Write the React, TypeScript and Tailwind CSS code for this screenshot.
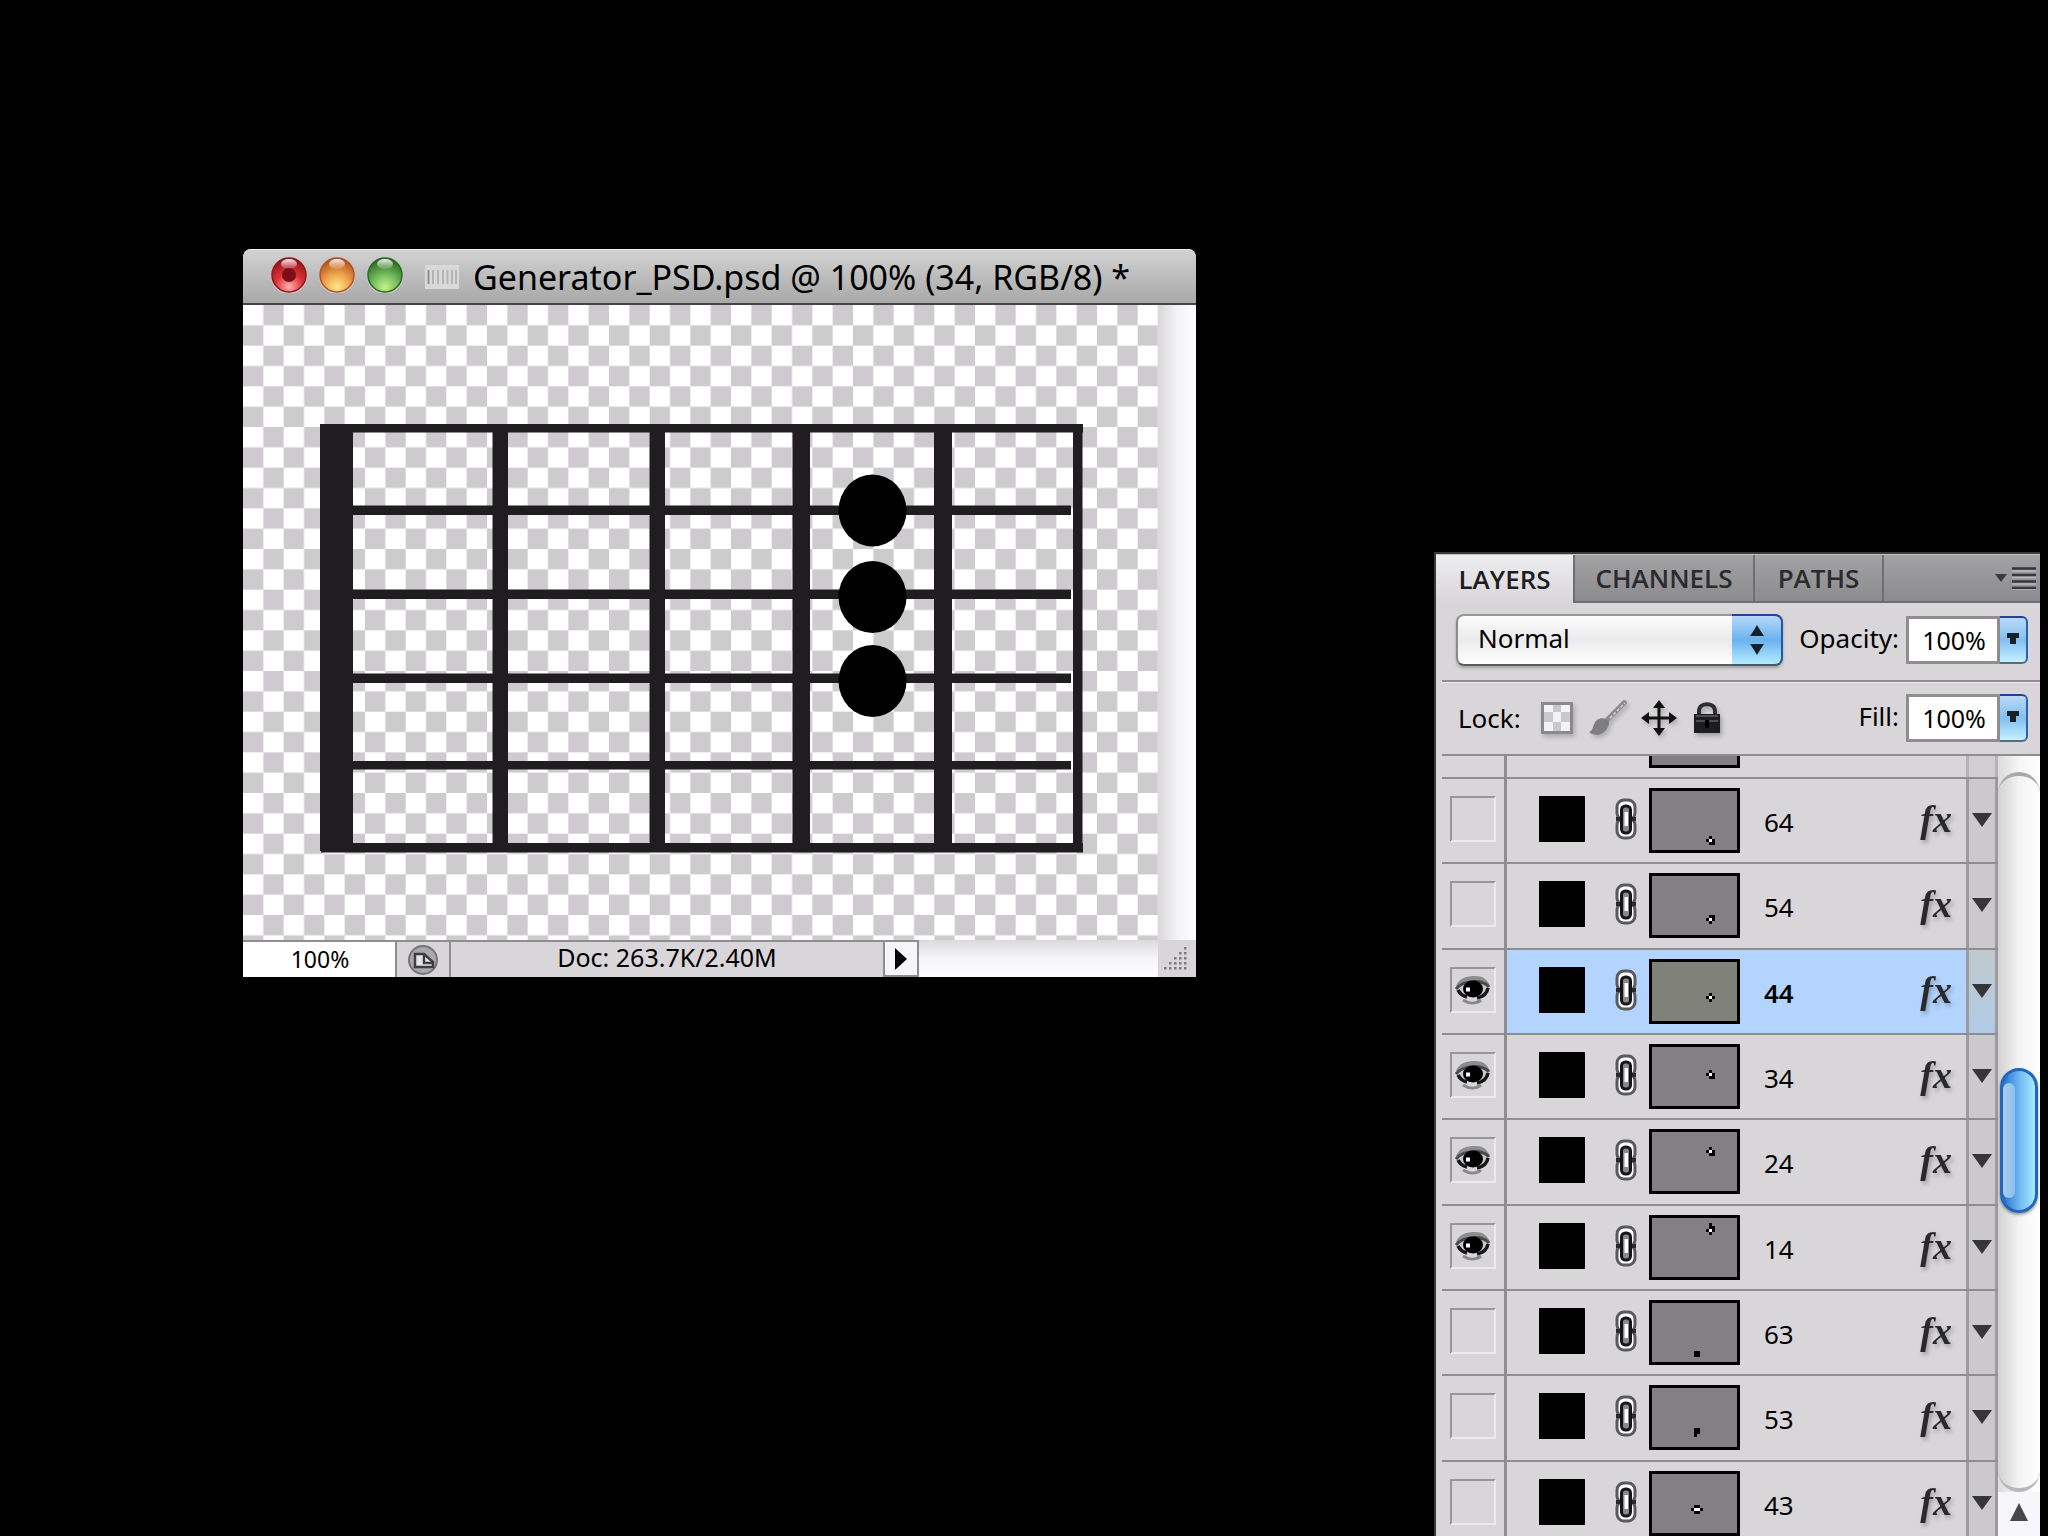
interface Layer {
  name: string;
  visible: boolean;
  // Mask marker: # is black, o is white
  mark: string[];
  markX: number;
  markY: number;
}

const LAYERS: Layer[] = [
  { name: '64', visible: false, mark: ['.#.', '#o#', '.##'], markX: 61, markY: 52 },
  { name: '54', visible: false, mark: ['.##', '#o#', '.#.'], markX: 61, markY: 46 },
  { name: '44', visible: true, mark: ['.#.', '#o#', '.#.'], markX: 61, markY: 38 },
  { name: '34', visible: true, mark: ['.#.', '#o#', '.##'], markX: 61, markY: 30 },
  { name: '24', visible: true, mark: ['.#.', '#o#', '.##'], markX: 61, markY: 22 },
  { name: '14', visible: true, mark: ['.#.', '.##', '#o#', '.#.'], markX: 61, markY: 14 },
  { name: '63', visible: false, mark: ['##', '##'], markX: 48, markY: 54 },
  { name: '53', visible: false, mark: ['##', '##', '#.'], markX: 48, markY: 47 },
  { name: '43', visible: false, mark: ['.##.', '#oo#', '.##.'], markX: 48, markY: 38 },
];

const SELECTED = '44';
const PX = 3;

function TrafficLight({ id, dark, mid, light, dot }: { id: string; dark: string; mid: string; light: string; dot?: boolean }) {
  return (
    <button aria-label={id} className="block size-9">
      <svg viewBox="0 0 36 36" className="size-9">
        <defs>
          <radialGradient id={id} cx="0.5" cy="0.85" r="0.8">
            <stop offset="0" stopColor={light} />
            <stop offset="0.5" stopColor={mid} />
            <stop offset="1" stopColor={dark} />
          </radialGradient>
          <linearGradient id={`${id}-shine`} x1="0" y1="0" x2="0" y2="1">
            <stop offset="0" stopColor="#fff" stopOpacity="0.9" />
            <stop offset="1" stopColor="#fff" stopOpacity="0.1" />
          </linearGradient>
        </defs>
        <circle cx="18" cy="19" r="18" fill="#e4e4e4" opacity="0.6" />
        <circle cx="18" cy="18" r="17" fill={`url(#${id})`} stroke={dark} strokeWidth="1.5" />
        <ellipse cx="18" cy="7" rx="8" ry="5" fill={`url(#${id}-shine)`} />
        {dot && <circle cx="18" cy="18" r="7" fill="#7c0f16" />}
      </svg>
    </button>
  );
}

function Fretboard() {
  return (
    <svg viewBox="0 0 915 635" className="block h-[635px] w-[915px] shrink-0">
      <defs>
        <pattern id="checker" width="40.667" height="40.667" patternUnits="userSpaceOnUse">
          <rect width="40.667" height="40.667" fill="#fff" />
          <rect x="20.333" width="20.334" height="20.333" fill="#cdcbcd" />
          <rect y="20.333" width="20.333" height="20.334" fill="#cdcbcd" />
        </pattern>
      </defs>
      <rect width="915" height="635" fill="url(#checker)" />
      <g fill="#1f1d20">
        <rect x="77" y="119" width="763" height="8.5" />
        <rect x="78" y="538" width="762" height="9.5" />
        <rect x="77" y="119" width="33" height="427" />
        <rect x="249.5" y="119" width="15.5" height="428" />
        <rect x="406.5" y="119" width="15.5" height="428" />
        <rect x="549.5" y="119" width="17.5" height="428" />
        <rect x="691" y="119" width="18" height="428" />
        <rect x="830" y="119" width="9.5" height="428" />
        <rect x="110" y="200.5" width="718" height="9.5" />
        <rect x="110" y="284.5" width="718" height="9.5" />
        <rect x="110" y="368.5" width="718" height="9.5" />
        <rect x="110" y="456" width="718" height="8.5" />
      </g>
      <g>
        <ellipse cx="629.5" cy="205.5" rx="34" ry="36" />
        <ellipse cx="629.5" cy="292" rx="34" ry="36" />
        <ellipse cx="629.5" cy="376" rx="34" ry="36" />
      </g>
    </svg>
  );
}

function ProofIcon() {
  return (
    <svg viewBox="0 0 32 32" className="size-8">
      <circle cx="16" cy="16" r="14" fill="#a9a8aa" stroke="#757476" strokeWidth="2" />
      <path d="M8 10h9l9 8v5H8z" fill="#e6e6e6" stroke="#3f3e40" strokeWidth="2.5" />
      <path d="M17 10v9h9" fill="none" stroke="#3f3e40" strokeWidth="2.5" />
    </svg>
  );
}

function DocumentWindow() {
  return (
    <section className="absolute top-[249px] left-[243px] flex w-[953px] flex-col overflow-hidden rounded-t-lg bg-[#d8d6d9]">
      <header className="flex h-14 items-center border-t border-b-2 border-t-[#efefef] border-b-[#454545] bg-linear-to-b from-[#d2d2d2] to-[#a8a8a8] pl-7">
        <div className="flex gap-3 pb-1">
          <TrafficLight id="close" dark="#94161c" mid="#dc3238" light="#ffb3b0" dot />
          <TrafficLight id="minimize" dark="#b3521f" mid="#eea04a" light="#ffe98a" />
          <TrafficLight id="zoom" dark="#2c6a24" mid="#6fb758" light="#c4f28e" />
        </div>
        <svg viewBox="0 0 34 24" className="mr-3.5 ml-[22px] h-6 w-[34px]">
          <rect width="34" height="24" fill="#d9d9d9" />
          <path d="M3.500 5v14M8 5v14M13 5v14M18 5v14M22.500 5v14M27 5v14M31 5v14" stroke="#b4b4b4" strokeWidth="2" />
          <path d="M3.500 5v14" stroke="#8a8a8a" strokeWidth="1.500" />
        </svg>
        <h1 className="text-[34px] leading-10 whitespace-nowrap text-black">Generator_PSD.psd @ 100% (34, RGB/8) *</h1>
      </header>
      <div className="flex">
        <Fretboard />
        <div className="flex-1 bg-linear-to-r from-[#d9d7da] via-[#f4f3f5] to-[#fdfcfe]" />
      </div>
      <footer className="flex h-[37px] text-[25px] leading-8">
        <input
          aria-label="Zoom level"
          defaultValue="100%"
          className="w-[154px] border-t-2 border-r-2 border-[#8f8d90] bg-white pb-0.5 pl-0.5 text-center text-[23px] outline-none"
        />
        <button aria-label="Proof" className="flex w-[54px] items-center justify-center border-t-2 border-r-2 border-[#8f8d90]">
          <ProofIcon />
        </button>
        <p className="w-[432px] border-t-2 border-[#8f8d90] text-center leading-[30px]">Doc: 263.7K/2.40M</p>
        <button aria-label="Status menu" className="flex w-9 items-center justify-center border-2 border-[#8f8d90] bg-[#f6f5f7]">
          <svg viewBox="0 0 14 24" className="h-6 w-3.5">
            <path d="M1 1l12 11L1 23z" />
          </svg>
        </button>
        <div className="flex-1 bg-linear-to-b from-[#dcdadd] via-[#f6f5f7] to-[#fdfcfe]" />
        <div className="flex w-[38px] items-center justify-center bg-[#d8d6d9] pr-1">
          <svg viewBox="0 0 26 26" className="size-[26px]" fill="#7b7a7c">
            {[0, 1, 2, 3, 4].map((row) =>
              Array.from({ length: row + 1 }, (_, i) => (
                <rect key={`${row}-${i}`} x={22 - i * 5} y={1 + row * 5} width="2.500" height="2.500" />
              )),
            )}
          </svg>
        </div>
      </footer>
    </section>
  );
}

function EyeIcon() {
  return (
    <svg viewBox="0 0 36 30" className="h-[30px] w-9">
      <path d="M1 11C4 3 12 1 20 1s12 3 15 10l-4 0C24 5 11 5 4 12z" fill="#8d8c8f" />
      <path d="M3 13C8 6 26 5 33 12c-1 2-2 4-4 5C22 24 9 22 3 13z" fill="#c9c8cb" />
      <path d="M1 14C8 5 27 4 34 12" fill="none" stroke="#4a494b" strokeWidth="3" />
      <ellipse cx="18" cy="14" rx="10" ry="8.500" />
      <rect x="11" y="12.500" width="4" height="4" fill="#fff" />
      <path d="M3 15c2 4 5 6 9 7M33 13c-1 6-6 9-11 10" fill="none" stroke="#171618" strokeWidth="3.500" />
      <path d="M8 25c6 4 13 4 18 0" fill="none" stroke="#8a898c" strokeWidth="3" />
    </svg>
  );
}

function LinkIcon() {
  return (
    <svg viewBox="0 0 22 42" className="h-[42px] w-[22px]">
      <rect x="2" y="2" width="18" height="20" rx="7" fill="#fff" stroke="#5a595b" strokeWidth="3" />
      <rect x="2" y="20" width="18" height="20" rx="7" fill="#fff" stroke="#5a595b" strokeWidth="3" />
      <path d="M1 21h5M16 21h5" stroke="#2a292b" strokeWidth="4" />
      <rect x="6.500" y="8" width="9" height="27" rx="4" fill="#8a898b" stroke="#161517" strokeWidth="3" />
      <rect x="9.500" y="14" width="3.500" height="14" fill="#fff" />
    </svg>
  );
}

function MaskThumb({ layer }: { layer: Layer }) {
  const left = Math.round(layer.markX - (layer.mark[0].length * PX) / 2);
  const top = Math.round(layer.markY - (layer.mark.length * PX) / 2);
  return (
    <svg viewBox="0 0 91 65" className="h-[65px] w-[91px]">
      <rect width="91" height="65" />
      <rect x="3" y="3" width="85" height="59" fill={layer.name === SELECTED ? '#808179' : '#828083'} />
      {layer.mark.map((row, y) =>
        [...row].map((c, x) =>
          c === '.' ? null : (
            <rect
              key={`${x}-${y}`}
              x={left + x * PX}
              y={top + y * PX}
              width={PX}
              height={PX}
              fill={c === 'o' ? '#fff' : '#000'}
            />
          ),
        ),
      )}
    </svg>
  );
}

function LayerRow({ layer }: { layer: Layer }) {
  const selected = layer.name === SELECTED;
  return (
    <li className="flex border-t-2 border-[#8f8d90]">
      <div className="w-[65px] shrink-0 border-r-3 border-[#8f8d90] pt-[17px] pl-2">
        <button
          aria-label={`Toggle visibility of layer ${layer.name}`}
          className="flex size-[46px] items-center justify-center border-2 border-t-[#98969a] border-r-[#eceaed] border-b-[#eceaed] border-l-[#98969a]"
        >
          {layer.visible && <EyeIcon />}
        </button>
      </div>
      <div className={`flex min-w-0 flex-1 items-start pt-[9px] pl-8 ${selected ? 'bg-[#b3d4ff]' : 'bg-[#d8d6d9]'}`}>
        <div className="mt-2 size-[46px] shrink-0 bg-black" />
        <div className="mt-[10px] mr-3 ml-[30px] shrink-0">
          <LinkIcon />
        </div>
        <MaskThumb layer={layer} />
        <span className={`mt-[18px] ml-6 text-[26px] leading-8 ${selected ? 'font-semibold' : ''}`}>{layer.name}</span>
        <span className="mt-[11px] mr-3.5 ml-auto font-['Liberation_Serif',serif] text-[38px] leading-10 font-bold text-[#2a292b] italic drop-shadow-[2px_3px_2px_#00000040]">
          fx
        </span>
      </div>
      <button
        aria-label={`Effects of layer ${layer.name}`}
        className={`flex w-8 shrink-0 items-start justify-center border-x-3 border-[#9d9b9e] pt-[34px] ${selected ? 'bg-linear-to-b from-[#bfc9cc] to-[#b2cae6]' : 'bg-[#cbc9cc]'}`}
      >
        <svg viewBox="0 0 20 14" className="h-3.5 w-5 shrink-0">
          <path d="M0 0h20L10 14z" fill="#363537" />
        </svg>
      </button>
    </li>
  );
}

function PercentField({ label, id }: { label: string; id: string }) {
  return (
    <div className="flex items-center">
      <label htmlFor={id} className="mr-[7px] pb-1 text-[26px] leading-8">
        {label}
      </label>
      <input
        id={id}
        defaultValue="100%"
        className="h-12 w-[94px] border-3 border-[#8f8d90] bg-white pl-0.5 text-center text-[25px] leading-8 outline-none"
      />
      <button
        aria-label={`${label} slider`}
        className="flex h-12 w-[28px] items-center justify-center rounded-r-md border-t-2 border-r-2 border-b-2 border-t-[#2a3f96] border-r-[#2c62b4] border-b-[#5d6b78] bg-linear-to-b from-[#b9d9f6] via-[#82bff0] to-[#c3f1ff]"
      >
        <svg viewBox="0 0 12 14" className="h-3.5 w-3">
          <path d="M0 0h12v5H9v6H3V5H0z" fill="#15202a" />
        </svg>
      </button>
    </div>
  );
}

function LockIcons() {
  return (
    <div className="flex items-center">
      <button aria-label="Lock transparent pixels" className="mr-4">
        <svg viewBox="0 0 32 32" className="size-8 drop-shadow-[2px_3px_2px_#00000030]">
          <rect x="1.500" y="1.500" width="29" height="29" fill="#f3f2f4" stroke="#8a898b" strokeWidth="3" />
          <path d="M12 3h8v7h-8zM3 10h9v10H3zM20 10h9v10h-9zM12 20h8v9h-8z" fill="#c9c8ca" />
        </svg>
      </button>
      <button aria-label="Lock image pixels" className="mr-3.5">
        <svg viewBox="0 0 38 36" className="h-9 w-[38px] drop-shadow-[2px_3px_2px_#00000030]">
          <path d="M0 32c5-1 3-8 8-12 4-3 10-2 12 1 1 6-5 13-11 14-4 0-7-1-9-3z" fill="#7f7e80" />
          <path d="M18 20L37 1" stroke="#8b8a8c" strokeWidth="5" />
          <path d="M21 18L36 3" stroke="#d4d3d5" strokeWidth="1.500" strokeDasharray="3 2" />
        </svg>
      </button>
      <button aria-label="Lock position" className="mr-4">
        <svg viewBox="0 0 36 36" className="size-9 drop-shadow-[2px_3px_2px_#00000030]">
          <path d="M18 5v26M5 18h26" stroke="#111" strokeWidth="3" />
          <path d="M18 0l3 4 3 4H12l3-4zM18 36l3-4 3-4H12l3 4zM0 18l8-6v12zM36 18l-8-6v12z" fill="#111" />
        </svg>
      </button>
      <button aria-label="Lock all">
        <svg viewBox="0 0 28 32" className="h-8 w-7 drop-shadow-[2px_3px_2px_#00000040]">
          <path d="M6 15V9c0-9 16-9 16 0v6" fill="none" stroke="#2d2c2e" strokeWidth="4" />
          <rect x="1" y="12" width="26" height="19" fill="#1d1c1e" />
          <path d="M3 14h22M3 19h22" stroke="#4e4d4f" strokeWidth="2" />
          <rect x="12" y="18" width="4" height="8" />
        </svg>
      </button>
    </div>
  );
}

function Scrollbar() {
  return (
    <div className="flex w-[42px] shrink-0 flex-col bg-linear-to-r from-[#dcdbdd] via-[#f6f6f6] to-[#fff]">
      <div className="mt-4 flex-1 rounded-full border-t-4 border-b-4 border-t-[#a9a8aa] border-b-[#b9b8ba] bg-linear-to-r from-[#d2d1d3] via-[#f4f4f4] to-[#fff] px-0.5 pt-[292px]">
        <div className="flex h-[145px] rounded-full border-3 border-[#2467b8] bg-linear-to-r from-[#1f72cf] via-[#6fb6f2] to-[#a8ecff] py-3 shadow-[0_2px_3px_#00000060]">
          <div className="w-3 rounded-full bg-linear-to-r from-[#a9ccec] to-[#8fc0ef]" />
        </div>
      </div>
      <button aria-label="Scroll up" className="flex h-11 items-center justify-center bg-[#f7f6f8] pb-1">
        <svg viewBox="0 0 18 18" className="size-[18px]">
          <path d="M9 0l9 18H0z" fill="#474648" />
        </svg>
      </button>
    </div>
  );
}

function LayersPanel() {
  const tab = 'border-r-2 border-b-2 border-[#6f6e70] text-[#2b2a2c]';
  return (
    <aside className="absolute top-[552px] right-2 bottom-0 flex w-[606px] flex-col overflow-hidden border-t-2 border-l-2 border-[#3a393b] bg-[#d8d6d9]">
      <nav className="flex h-[49px] shrink-0 border-t border-[#c4c3c5] bg-linear-to-b from-[#a2a1a3] to-[#8b8a8c] font-['Open_Sans','Noto_Sans',sans-serif] text-[26px] leading-10 font-semibold">
        <button className="w-[139px] border-r-2 border-[#6f6e70] bg-linear-to-b from-[#eeedef] to-[#d8d6d9] text-[#1d1c1e]">LAYERS</button>
        <button className={`w-[180px] ${tab}`}>CHANNELS</button>
        <button className={`w-[129px] ${tab}`}>PATHS</button>
        <button aria-label="Panel menu" className="flex flex-1 items-center justify-end border-b-2 border-[#6f6e70] pr-1">
          <svg viewBox="0 0 42 24" className="h-6 w-[42px]">
            <path d="M1 8h12l-6 8z" fill="#3b3a3c" />
            <path d="M18 2.500h24M18 9h24M18 15.500h24M18 22h24" stroke="#38373a" strokeWidth="2.500" />
            <path d="M18 5h24M18 11.500h24M18 18h24M18 24h24" stroke="#b9b8ba" strokeWidth="1.500" />
          </svg>
        </button>
      </nav>

      <div className="ml-1.5 flex h-[79px] shrink-0 items-center justify-between border-b-2 border-[#8f8d90] pr-3 pb-1 pl-3.5">
        <div className="relative">
          <select
            aria-label="Blend mode"
            className="h-[52px] w-[327px] appearance-none rounded-lg border-2 border-t-[#98969a] border-r-[#77767a] border-b-[#5c5b5e] border-l-[#8b8a8d] bg-linear-to-b from-[#fdfdfd] via-[#ebeaec] to-[#ffffff] pb-1 pl-5 text-[26px] leading-8 shadow-[0_2px_3px_#00000040] outline-none"
          >
            <option>Normal</option>
          </select>
          <div className="pointer-events-none absolute inset-y-0 right-0 flex w-[51px] items-center justify-center rounded-r-lg border-t-2 border-r-2 border-b-2 border-t-[#2a3f96] border-r-[#2358a8] border-b-[#4c5a68] bg-linear-to-b from-[#b5d8f8] via-[#6ab2ee] to-[#b4ecff]">
            <svg viewBox="0 0 14 32" className="h-8 w-3.5">
              <path d="M7 1l3 5 4 6H0l4-6zM7 31l3-5 4-6H0l4 6z" fill="#15202a" />
            </svg>
          </div>
        </div>
        <PercentField label="Opacity:" id="opacity" />
      </div>

      <div className="ml-1.5 flex h-[74px] shrink-0 items-center justify-between border-t border-b-2 border-t-[#eceaed] border-b-[#8f8d90] pr-3 pb-0.5 pl-4">
        <div className="flex items-center">
          <span className="mr-5 text-[26px] leading-8">Lock:</span>
          <LockIcons />
        </div>
        <PercentField label="Fill:" id="fill" />
      </div>

      <div className="ml-1.5 flex min-h-0 flex-1">
        <div className="min-w-0 flex-1 overflow-hidden">
          {/* Bottom edge of the row scrolled out of view */}
          <div className="flex h-[21px]">
            <div className="w-[65px] border-r-3 border-[#8f8d90]" />
            <div className="flex-1 pl-[142px]">
              <div className="h-3 w-[91px] border-3 border-t-0 border-black bg-[#828083]" />
            </div>
            <div className="w-8 border-x-3 border-[#b5b3b6] bg-[#d1cfd2]" />
          </div>
          <ul className="grid h-[768px] auto-rows-fr">
            {LAYERS.map((layer) => (
              <LayerRow key={layer.name} layer={layer} />
            ))}
          </ul>
        </div>
        <Scrollbar />
      </div>
    </aside>
  );
}

export default function App() {
  return (
    <main className="relative h-screen w-full overflow-hidden bg-black font-['Noto_Sans','Open_Sans',sans-serif] text-black">
      <DocumentWindow />
      <LayersPanel />
    </main>
  );
}
